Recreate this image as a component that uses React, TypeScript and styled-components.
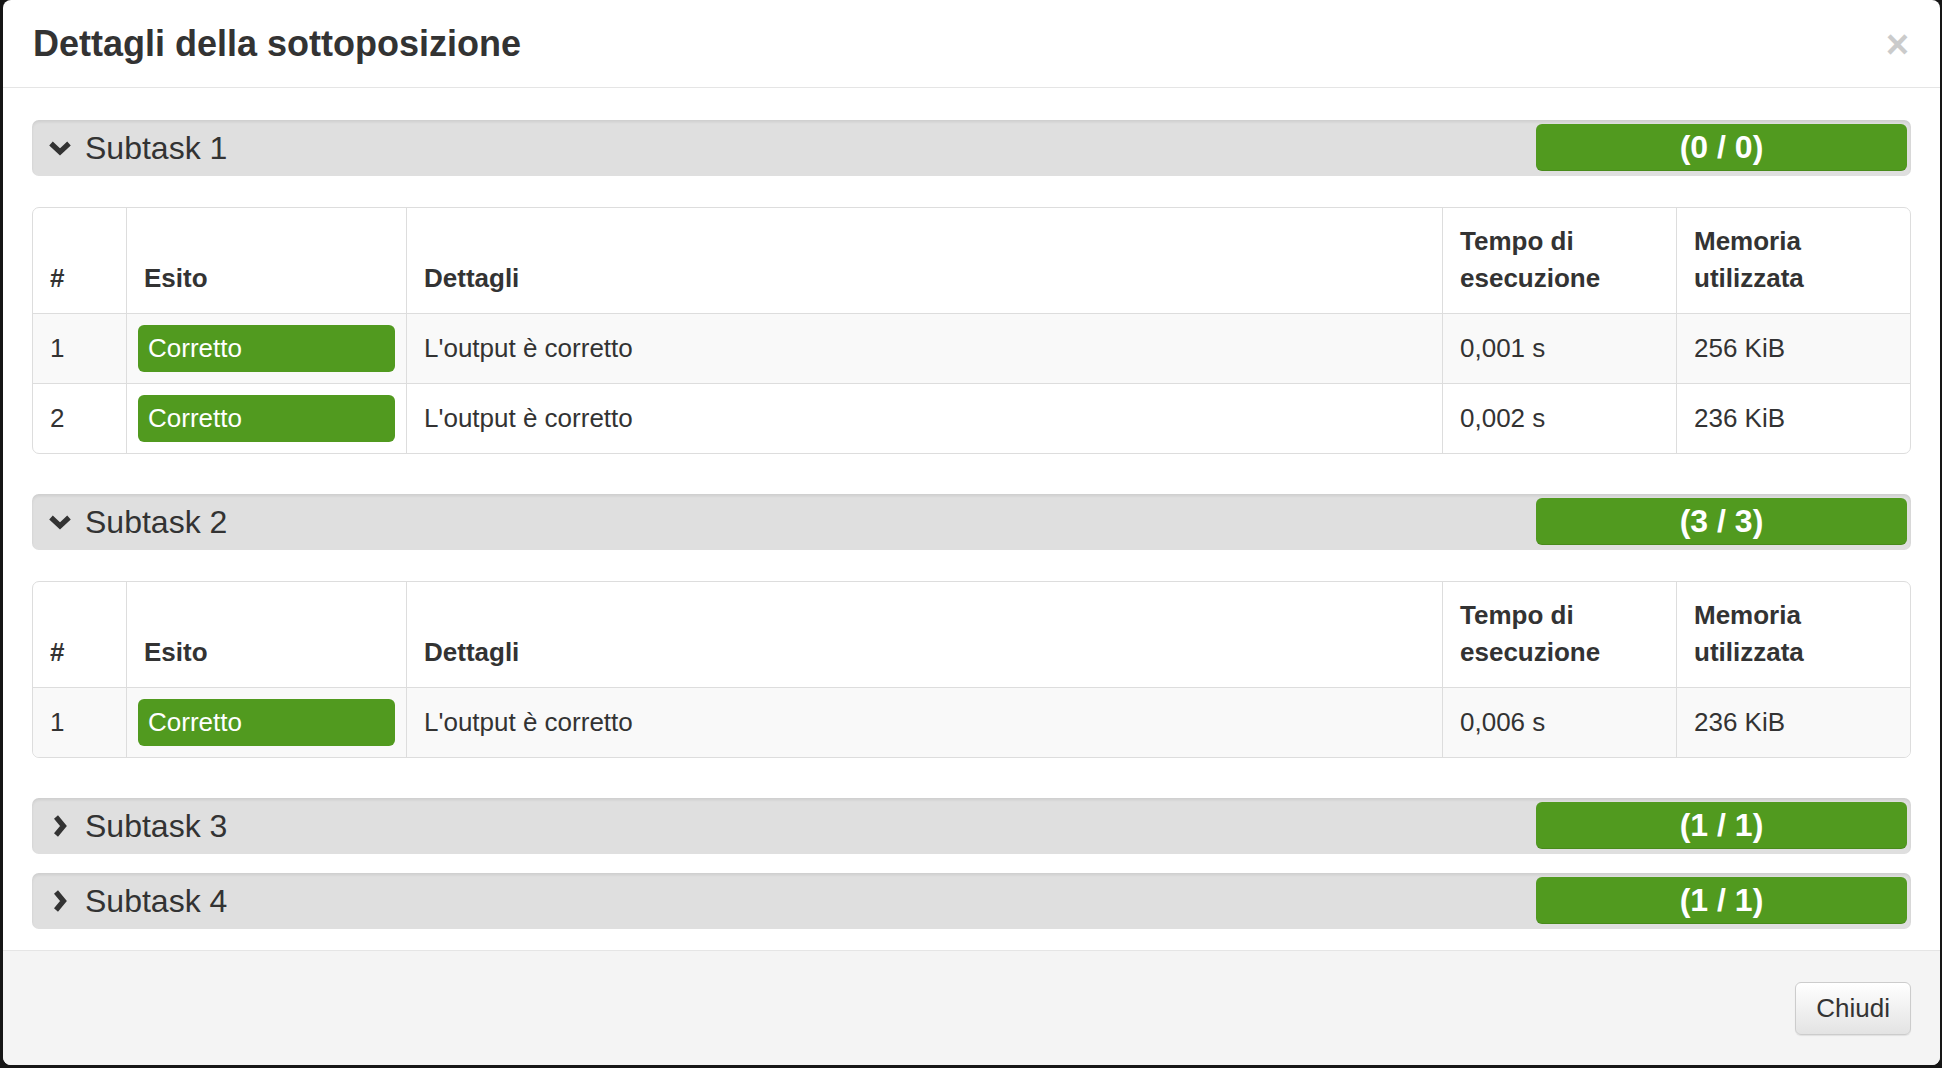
import React from 'react';
import styled, {createGlobalStyle} from "styled-components";

const GlobalStyle = createGlobalStyle`
  html, body {
    margin: 0;
    padding: 0;
    background: #161616;
  }
  * {
    box-sizing: border-box;
  }
`

interface TestRow {
    id: number
    details: string
    time: string
    memory: string
}

interface Subtask {
    name: string
    score: string
    open: boolean
    rows: TestRow[]
}

const subtasks: Subtask[] = [
    {
        name: 'Subtask 1', score: '(0 / 0)', open: true, rows: [
            {id: 1, details: "L'output è corretto", time: '0,001 s', memory: '256 KiB'},
            {id: 2, details: "L'output è corretto", time: '0,002 s', memory: '236 KiB'},
        ]
    },
    {
        name: 'Subtask 2', score: '(3 / 3)', open: true, rows: [
            {id: 1, details: "L'output è corretto", time: '0,006 s', memory: '236 KiB'},
        ]
    },
    {name: 'Subtask 3', score: '(1 / 1)', open: false, rows: []},
    {name: 'Subtask 4', score: '(1 / 1)', open: false, rows: []},
]

const Chevron: React.FC<{open: boolean}> = ({open}) => (
    <ChevronBox>
        {open ? (
            <svg width="24" height="16" viewBox="0 0 24 16">
                <path d="M3 3.5 L12 12 L21 3.5" fill="none" stroke="#333" strokeWidth="5.2" strokeLinejoin="miter"/>
            </svg>
        ) : (
            <svg width="16" height="24" viewBox="0 0 16 24">
                <path d="M4 3 L11.5 12 L4 21" fill="none" stroke="#333" strokeWidth="5.2" strokeLinejoin="miter"/>
            </svg>
        )}
    </ChevronBox>
)

const SubmissionDetails: React.FC = () => {
    return (
        <>
            <GlobalStyle/>
            <Backdrop>
                <Modal>
                    <Header>
                        <Title>Dettagli della sottoposizione</Title>
                        <CloseButton>×</CloseButton>
                    </Header>
                    <Body>
                        {subtasks.map(st => (
                            <Block key={st.name}>
                                <SubtaskBar>
                                    <Chevron open={st.open}/>
                                    <SubtaskName>{st.name}</SubtaskName>
                                    <Score>{st.score}</Score>
                                </SubtaskBar>
                                {st.open && (
                                    <Table>
                                        <colgroup>
                                            <col style={{width: 93}}/>
                                            <col style={{width: 280}}/>
                                            <col/>
                                            <col style={{width: 234}}/>
                                            <col style={{width: 234}}/>
                                        </colgroup>
                                        <thead>
                                        <tr>
                                            <th>#</th>
                                            <th>Esito</th>
                                            <th>Dettagli</th>
                                            <th>Tempo di esecuzione</th>
                                            <th>Memoria utilizzata</th>
                                        </tr>
                                        </thead>
                                        <tbody>
                                        {st.rows.map(r => (
                                            <tr key={r.id}>
                                                <td>{r.id}</td>
                                                <OutcomeCell><Outcome>Corretto</Outcome></OutcomeCell>
                                                <td>{r.details}</td>
                                                <td>{r.time}</td>
                                                <td>{r.memory}</td>
                                            </tr>
                                        ))}
                                        </tbody>
                                    </Table>
                                )}
                            </Block>
                        ))}
                    </Body>
                    <Footer>
                        <Button>Chiudi</Button>
                    </Footer>
                </Modal>
            </Backdrop>
        </>
    );
};

const Backdrop = styled.div`
  width: 1942px;
  height: 1068px;
  padding: 0 2px 3px 3px;
  background: #161616;
  font-family: "Liberation Sans", Arial, Helvetica, sans-serif;
  color: #333;
`

const Modal = styled.div`
  height: 100%;
  display: flex;
  flex-direction: column;
  background: #fff;
  border-radius: 8px;
  overflow: hidden;
`

const Header = styled.div`
  height: 88px;
  flex: none;
  display: flex;
  align-items: center;
  justify-content: space-between;
  padding: 0 31px 0 30px;
  border-bottom: 1px solid #e5e5e5;
`

const Title = styled.h4`
  margin: 0;
  font-size: 36px;
  line-height: 40px;
  font-weight: bold;
  color: #333;
`

const CloseButton = styled.button`
  border: none;
  background: transparent;
  padding: 0;
  font-family: "Liberation Sans", Arial, sans-serif;
  font-size: 40px;
  font-weight: bold;
  line-height: 40px;
  color: #000;
  opacity: 0.2;
  cursor: pointer;
`

const Body = styled.div`
  flex: 1;
  padding: 32px 29px 20px;
`

const Block = styled.div`
  display: flex;
  flex-direction: column;
  margin-bottom: 19px;

  &:last-child {
    margin-bottom: 0;
  }
`

const SubtaskBar = styled.div`
  height: 56px;
  display: flex;
  align-items: center;
  padding: 4px 4px 5px 0;
  background: #dfdfdf;
  border-radius: 7px;
  box-shadow: inset 0 2px 3px rgba(0, 0, 0, 0.08);
`

const ChevronBox = styled.div`
  width: 53px;
  height: 100%;
  display: flex;
  align-items: center;
  justify-content: center;
  padding-left: 2px;
`

const SubtaskName = styled.div`
  flex: 1;
  font-size: 32px;
  line-height: 40px;
  color: #333;
`

const Score = styled.div`
  width: 371px;
  height: 100%;
  display: flex;
  align-items: center;
  justify-content: center;
  background: #519a1f;
  border-radius: 6px;
  color: #fff;
  font-size: 32px;
  font-weight: bold;
  box-shadow: inset 0 -1px 0 rgba(0, 0, 0, 0.1);
`

const Table = styled.table`
  width: 100%;
  margin: 31px 0 21px;
  table-layout: fixed;
  border-collapse: separate;
  border-spacing: 0;
  border: 1px solid #ddd;
  border-radius: 7px;
  font-size: 26px;
  line-height: 37px;

  th, td {
    padding: 16px 17px;
    text-align: left;
    border-left: 1px solid #ddd;
  }

  th:first-child, td:first-child {
    border-left: none;
  }

  th {
    padding-top: 15px;
    vertical-align: bottom;
    font-weight: bold;
  }

  td {
    vertical-align: middle;
    border-top: 1px solid #ddd;
  }

  tbody tr:nth-child(odd) td {
    background: #f9f9f9;
  }

  tbody tr:last-child td:first-child {
    border-bottom-left-radius: 7px;
  }

  tbody tr:last-child td:last-child {
    border-bottom-right-radius: 7px;
  }
`

const OutcomeCell = styled.td`
  && {
    padding: 10px 11px 11px;
  }
`

const Outcome = styled.div`
  height: 47px;
  display: flex;
  align-items: center;
  padding: 0 10px;
  background: #519a1f;
  border-radius: 6px;
  color: #fff;
`

const Footer = styled.div`
  flex: none;
  height: 115px;
  display: flex;
  align-items: center;
  justify-content: flex-end;
  padding: 0 29px;
  background: #f4f4f4;
  border-top: 1px solid #e5e5e5;
`

const Button = styled.button`
  height: 53px;
  padding: 0 20px;
  font-family: "Liberation Sans", Arial, sans-serif;
  font-size: 26px;
  color: #333;
  background: linear-gradient(to bottom, #fff 0%, #e3e3e3 100%);
  border: 1px solid #ccc;
  border-radius: 6px;
  box-shadow: 0 1px 1px rgba(0, 0, 0, 0.08);
  cursor: pointer;
`

export default SubmissionDetails;
